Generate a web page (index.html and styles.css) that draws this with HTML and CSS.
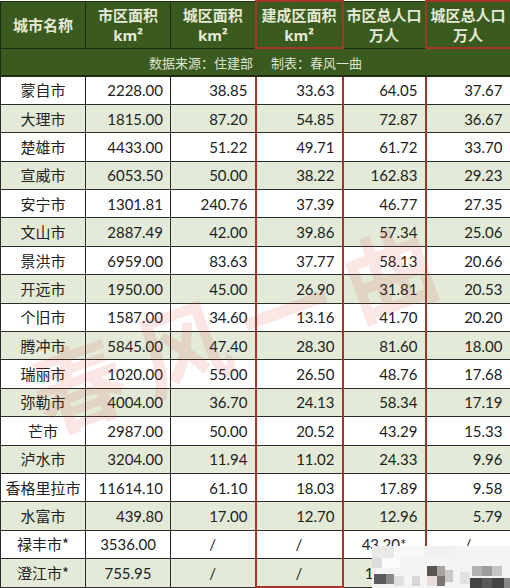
FILE: index.html
```html
<!DOCTYPE html>
<html lang="zh">
<head>
<meta charset="utf-8">
<link rel="stylesheet" href="styles.css">
</head>
<body>
<div class="wrap">
<table class="grid">
  <colgroup>
    <col class="c1"><col class="c2"><col class="c3"><col class="c4"><col class="c5"><col class="c6">
  </colgroup>
  <thead>
    <tr class="head">
      <th>城市名称</th>
      <th>市区面积<br><span class="unit">km²</span></th>
      <th>城区面积<br><span class="unit">km²</span></th>
      <th class="red">建成区面积<br><span class="unit">km²</span></th>
      <th>市区总人口<br>万人</th>
      <th class="red">城区总人口<br>万人</th>
    </tr>
    <tr class="sub">
      <th colspan="6"><span>数据来源：住建部</span><span class="gap">制表：春风一曲</span></th>
    </tr>
  </thead>
  <tbody>
    <tr><td class="name">蒙自市</td><td>2228.00</td><td>38.85</td><td class="red">33.63</td><td>64.05</td><td class="red">37.67</td></tr>
    <tr class="alt"><td class="name">大理市</td><td>1815.00</td><td>87.20</td><td class="red">54.85</td><td>72.87</td><td class="red">36.67</td></tr>
    <tr><td class="name">楚雄市</td><td>4433.00</td><td>51.22</td><td class="red">49.71</td><td>61.72</td><td class="red">33.70</td></tr>
    <tr class="alt"><td class="name">宣威市</td><td>6053.50</td><td>50.00</td><td class="red">38.22</td><td>162.83</td><td class="red">29.23</td></tr>
    <tr><td class="name">安宁市</td><td>1301.81</td><td>240.76</td><td class="red">37.39</td><td>46.77</td><td class="red">27.35</td></tr>
    <tr class="alt"><td class="name">文山市</td><td>2887.49</td><td>42.00</td><td class="red">39.86</td><td>57.34</td><td class="red">25.06</td></tr>
    <tr><td class="name">景洪市</td><td>6959.00</td><td>83.63</td><td class="red">37.77</td><td>58.13</td><td class="red">20.66</td></tr>
    <tr class="alt"><td class="name">开远市</td><td>1950.00</td><td>45.00</td><td class="red">26.90</td><td>31.81</td><td class="red">20.53</td></tr>
    <tr><td class="name">个旧市</td><td>1587.00</td><td>34.60</td><td class="red">13.16</td><td>41.70</td><td class="red">20.20</td></tr>
    <tr class="alt"><td class="name">腾冲市</td><td>5845.00</td><td>47.40</td><td class="red">28.30</td><td>81.60</td><td class="red">18.00</td></tr>
    <tr><td class="name">瑞丽市</td><td>1020.00</td><td>55.00</td><td class="red">26.50</td><td>48.76</td><td class="red">17.68</td></tr>
    <tr class="alt"><td class="name">弥勒市</td><td>4004.00</td><td>36.70</td><td class="red">24.13</td><td>58.34</td><td class="red">17.19</td></tr>
    <tr><td class="name">芒市</td><td>2987.00</td><td>50.00</td><td class="red">20.52</td><td>43.29</td><td class="red">15.33</td></tr>
    <tr class="alt"><td class="name">泸水市</td><td>3204.00</td><td>11.94</td><td class="red">11.02</td><td>24.33</td><td class="red">9.96</td></tr>
    <tr><td class="name">香格里拉市</td><td>11614.10</td><td>61.10</td><td class="red">18.03</td><td>17.89</td><td class="red">9.58</td></tr>
    <tr class="alt"><td class="name">水富市</td><td>439.80</td><td>17.00</td><td class="red">12.70</td><td>12.96</td><td class="red">5.79</td></tr>
    <tr class="center"><td class="name">禄丰市*</td><td>3536.00</td><td>/</td><td class="red">/</td><td>43.20*</td><td class="red">/</td></tr>
    <tr class="alt center last"><td class="name">澄江市*</td><td>755.95</td><td>/</td><td class="red">/</td><td>18.50</td><td class="red">/</td></tr>
  </tbody>
</table>
<div class="watermark">春风一曲</div>
<svg class="mosaic" width="140" height="44" viewBox="0 0 140 44">
  <rect x="0" y="0" width="140" height="44" fill="#f4f4f4"/>
  <rect x="0" y="0" width="22" height="12" fill="#e9e9e9"/>
  <rect x="22" y="0" width="30" height="12" fill="#f8f8f8"/>
  <rect x="52" y="0" width="30" height="12" fill="#f1f1f1"/>
  <rect x="0" y="12" width="10" height="10" fill="#dcdcdc"/>
  <rect x="10" y="12" width="18" height="10" fill="#fbfbfb"/>
  <rect x="2" y="28" width="12" height="10" fill="#5a5a5a"/>
  <rect x="14" y="28" width="8" height="10" fill="#8a8a8a"/>
  <rect x="22" y="30" width="10" height="10" fill="#e0e0e0"/>
  <rect x="40" y="30" width="8" height="10" fill="#d8d8d8"/>
  <rect x="55" y="20" width="10" height="10" fill="#5b5552"/>
  <rect x="65" y="20" width="8" height="10" fill="#a8a4a2"/>
  <rect x="55" y="30" width="10" height="10" fill="#e8dcdc"/>
  <rect x="65" y="30" width="8" height="10" fill="#7a7473"/>
  <rect x="73" y="24" width="8" height="12" fill="#c8c8c8"/>
  <rect x="88" y="26" width="10" height="12" fill="#e2e2e2"/>
  <rect x="100" y="20" width="10" height="10" fill="#b2b2b2"/>
  <rect x="110" y="20" width="10" height="10" fill="#9c9c9c"/>
  <rect x="120" y="20" width="10" height="10" fill="#c4c4c4"/>
  <rect x="98" y="32" width="12" height="12" fill="#444"/>
  <rect x="110" y="32" width="10" height="12" fill="#5a5a5a"/>
  <rect x="120" y="32" width="12" height="12" fill="#444"/>
  <rect x="132" y="32" width="8" height="12" fill="#888"/>
</svg>
</div>
</body>
</html>
```

FILE: styles.css
```css
html, body {
  margin: 0;
  padding: 0;
  background: #ffffff;
}

.wrap {
  position: relative;
  width: 510px;
  height: 588px;
  overflow: hidden;
}

.grid {
  width: 510px;
  table-layout: fixed;
  border-collapse: collapse;
  font-family: Lato, "Noto Sans CJK SC", sans-serif;
  color: #222;
}

.c1 { width: 85px; }
.c2 { width: 85px; }
.c3 { width: 85px; }
.c4 { width: 87px; }
.c5 { width: 83px; }
.c6 { width: 85px; }

.head th {
  height: 45px;
  padding: 0;
  background: #3b5a20;
  color: #e4ead5;
  font-family: "Noto Sans CJK SC", sans-serif;
  font-size: 15px;
  font-weight: bold;
  line-height: 20px;
  text-align: center;
  vertical-align: middle;
  border: 1px solid #1f2c13;
}

.head th .unit {
  font-family: "Open Sans", "Noto Sans CJK SC", sans-serif;
  font-weight: bold;
}

.head th.red {
  border: 2px solid #a8352a;
}

.sub th {
  height: 26px;
  padding: 0;
  background: #3b5a20;
  color: #dde4cf;
  font-family: "Noto Sans CJK SC", sans-serif;
  font-size: 13px;
  font-weight: normal;
  text-align: center;
  vertical-align: middle;
  border: 1px solid #1f2c13;
  border-bottom: 2px solid #1f2c13;
}

.sub .gap {
  margin-left: 18px;
}

tbody tr {
  height: 28.4px;
}

tbody td {
  padding: 0 7px 0 0;
  font-size: 15px;
  line-height: 18px;
  text-align: right;
  vertical-align: middle;
  border: 1px solid #2b2b2b;
  background: #ffffff;
  white-space: nowrap;
  overflow: hidden;
}

tbody tr.alt td {
  background: #e3ebd8;
}

tbody td.name {
  padding: 0;
  text-align: center;
  font-family: "Noto Sans CJK SC", sans-serif;
}

tbody tr.center td {
  padding: 0;
  text-align: center;
}

tbody td.red {
  border-left: 2px solid #a8352a;
  border-right: 2px solid #a8352a;
}

tbody tr.last td.red {
  border-bottom: 2px solid #a8352a;
}

.watermark {
  position: absolute;
  left: 20px;
  top: 250px;
  width: 470px;
  font-family: "Noto Sans CJK SC", sans-serif;
  font-weight: bold;
  font-size: 92px;
  letter-spacing: 18px;
  color: rgba(225, 60, 60, 0.13);
  transform: rotate(-20deg);
  transform-origin: center;
  white-space: nowrap;
  pointer-events: none;
}

.mosaic {
  position: absolute;
  left: 372px;
  top: 546px;
  display: block;
}
```
